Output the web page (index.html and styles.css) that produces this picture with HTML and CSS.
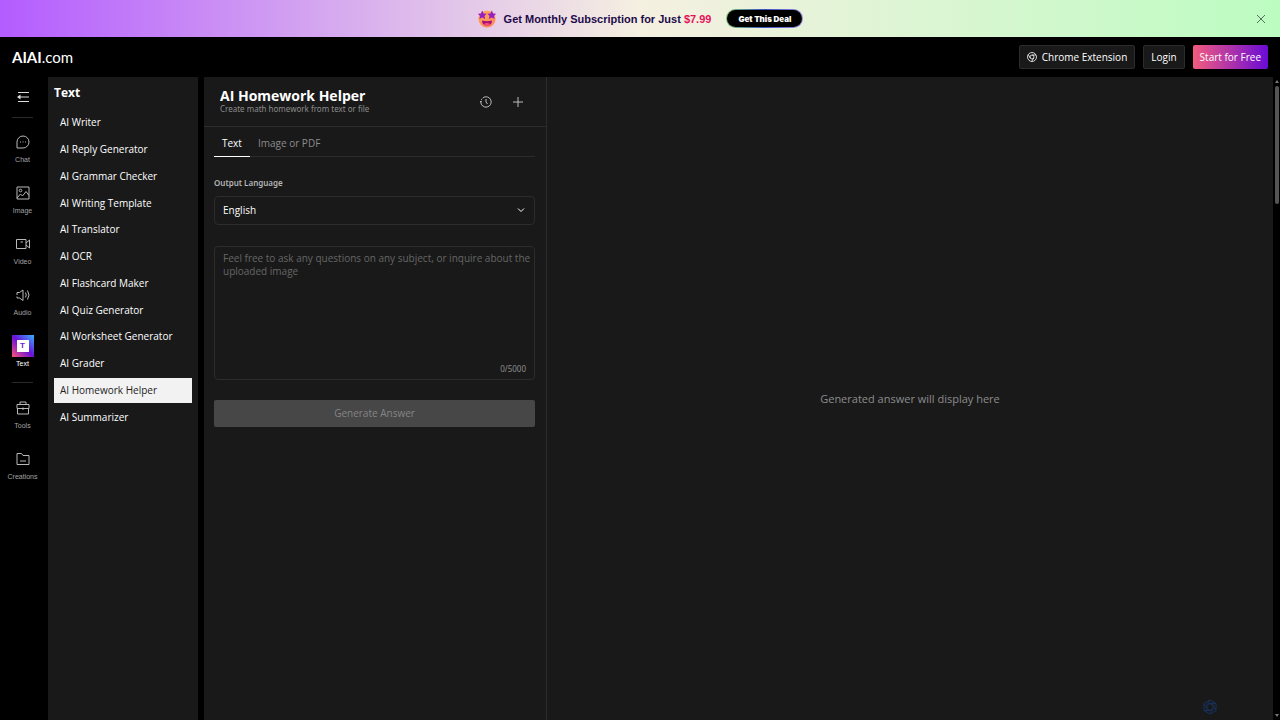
FILE: index.html
```html
<!DOCTYPE html>
<html lang="en">
<head>
<meta charset="utf-8">
<meta name="viewport" content="width=device-width, initial-scale=1">
<title>AI Homework Helper</title>
<link rel="stylesheet" href="styles.css">
</head>
<body>
<aside class="promo">
  <div class="promo-content">
    <svg class="promo-emoji" viewBox="0 0 20 20">
      <defs><linearGradient id="face" x1="0" y1="0" x2="0.4" y2="1"><stop offset="0" stop-color="#ffad55"/><stop offset="1" stop-color="#ff8a5c"/></linearGradient></defs>
      <circle cx="10" cy="10" r="8.6" fill="url(#face)"/>
      <path d="M5.2 1.6l1.5 2.8 3 .4-2.2 2.2.6 3.1-2.9-1.5-2.8 1.5.6-3.1L.8 4.8l3-.4z" fill="#9a1fc0"/>
      <path d="M14.8 1.6l1.4 2.8 3 .4-2.2 2.2.6 3.1-2.8-1.5-2.9 1.5.6-3.1-2.2-2.2 3-.4z" fill="#9a1fc0"/>
      <path d="M5 11.5c3 1 7 1 10 0 0 3.3-2 5-5 5s-5-1.7-5-5z" fill="#a30f7c"/>
      <path d="M7 15c1.5-1.2 4.5-1.2 6 0-1.5 1.7-4.5 1.7-6 0z" fill="#ff4f7a"/>
    </svg>
    <p class="promo-text">Get Monthly Subscription for Just <strong class="promo-price">$7.99</strong></p>
    <button class="promo-button" type="button">Get This Deal</button>
  </div>
  <button class="promo-close" type="button" aria-label="Close">
    <svg viewBox="0 0 10 10" width="10" height="10"><path d="M1 1l8 8M9 1L1 9"/></svg>
  </button>
</aside>

<header class="topbar">
  <a class="logo" href="#"><b class="logo-strong">AIAI</b>.com</a>
  <nav class="actions">
    <button class="button" type="button">
      <svg class="chrome" viewBox="0 0 10 10"><circle cx="5" cy="5" r="4.5"/><circle cx="5" cy="5" r="2"/><path d="M5 3h4M3.3 6L1.2 2.6M6.7 6L4.7 9.4"/></svg>
      Chrome Extension
    </button>
    <button class="button" type="button">Login</button>
    <button class="button button-primary" type="button">Start for Free</button>
  </nav>
</header>

<div class="shell">
  <nav class="rail">
    <button class="rail-toggle" type="button" aria-label="Collapse menu">
      <svg viewBox="0 0 12 12" width="12" height="12"><path d="M1 1.5h11M3 6h9M1 10.5h11"/><path class="solid" d="M0 6l3.5-2.5v5z"/></svg>
    </button>
    <hr class="rail-line">
    <div class="rail-group">
      <a class="rail-item" href="#"><span class="rail-icon"><svg viewBox="0 0 14 14"><path d="M1 13V7a6 6 0 1 1 6 6z"/><path d="M4 7h1M6.5 7h1M9 7h1"/></svg></span>Chat</a>
      <a class="rail-item" href="#"><span class="rail-icon"><svg viewBox="0 0 14 14"><path d="M1 1h12v12H1zM1 12l3.5-4 2 2L10 5.500l3 4"/><circle cx="4.5" cy="4.5" r="1.3"/></svg></span>Image</a>
      <a class="rail-item" href="#"><span class="rail-icon"><svg viewBox="0 0 14 14"><path d="M.5 2.5h9.5v9H.5zM10 6l3.500-3v8L10 8M4.500 5H7"/></svg></span>Video</a>
      <a class="rail-item" href="#"><span class="rail-icon"><svg viewBox="0 0 14 14"><path d="M1 4.500h2.500L7 2v10.500L3.500 10H1V8.500M1 4.500V7M9.500 4.500q1.500 2.500 0 5M11.500 2.500q3 4.500 0 9"/></svg></span>Audio</a>
      <a class="rail-item rail-current" href="#"><span class="rail-icon"><span class="text-tile">T</span></span>Text</a>
    </div>
    <hr class="rail-line">
    <div class="rail-group">
      <a class="rail-item" href="#"><span class="rail-icon"><svg viewBox="0 0 14 14"><path d="M4 3.500V1h6v2.500M1 3.500h12v4H1zM1.500 7.500v5.500h11V7.500M7 6.500v2.500"/></svg></span>Tools</a>
      <a class="rail-item" href="#"><span class="rail-icon"><svg viewBox="0 0 14 14"><path d="M1 1.500h4.500L7 3.500h6v9H1zM4 9h6"/></svg></span>Creations</a>
    </div>
  </nav>

  <nav class="sidebar">
    <h2 class="sidebar-title">Text</h2>
    <ul class="tools">
      <li><a class="tool" href="#">AI Writer</a></li>
      <li><a class="tool" href="#">AI Reply Generator</a></li>
      <li><a class="tool" href="#">AI Grammar Checker</a></li>
      <li><a class="tool" href="#">AI Writing Template</a></li>
      <li><a class="tool" href="#">AI Translator</a></li>
      <li><a class="tool" href="#">AI OCR</a></li>
      <li><a class="tool" href="#">AI Flashcard Maker</a></li>
      <li><a class="tool" href="#">AI Quiz Generator</a></li>
      <li><a class="tool" href="#">AI Worksheet Generator</a></li>
      <li><a class="tool" href="#">AI Grader</a></li>
      <li><a class="tool tool-current" href="#">AI Homework Helper</a></li>
      <li><a class="tool" href="#">AI Summarizer</a></li>
    </ul>
  </nav>

  <main class="workspace">
    <section class="panel">
      <header class="panel-header">
        <div class="panel-heading">
          <h1 class="panel-title">AI Homework Helper</h1>
          <p class="panel-subtitle">Create math homework from text or file</p>
        </div>
        <div class="panel-tools">
          <button class="icon-button" type="button" aria-label="History"><svg viewBox="0 0 12 12"><path d="M3 1.7A5.2 5.2 0 1 1 .8 6M.8 6l-.6-1M.8 6l1-.8M1.3 3.900l.9-1.300M6 3v3l1.500 2"/></svg></button>
          <button class="icon-button" type="button" aria-label="New"><svg viewBox="0 0 12 12"><path d="M6 1v10M1 6h10"/></svg></button>
        </div>
      </header>
      <form class="form">
        <div class="tabs" role="tablist">
          <button class="tab tab-current" type="button" role="tab" aria-selected="true">Text</button>
          <button class="tab" type="button" role="tab" aria-selected="false">Image or PDF</button>
        </div>
        <label class="label" for="language">Output Language</label>
        <div class="select-wrap">
          <select class="select" id="language"><option>English</option></select>
          <svg class="chevron" viewBox="0 0 8 8"><path d="M1 2.500l3 3 3-3"/></svg>
        </div>
        <div class="question">
          <textarea class="textarea" aria-label="Question" placeholder="Feel free to ask any questions on any subject, or inquire about the uploaded image"></textarea>
          <span class="counter">0/5000</span>
        </div>
        <button class="submit" type="button" disabled>Generate Answer</button>
      </form>
    </section>
    <section class="result">
      <p class="result-text">Generated answer will display here</p>
      <div class="mark">
        <svg class="mark-icon" viewBox="0 0 16 16"><path d="M8 1l6 3.500v7L8 15l-6-3.500v-7zM8 1L5 6.200v5.300M14 4.500H8L4.500 6.500M14 11.500L11 6.300 6.500 3.800M8 15l3-5.200V4.500M2 11.500h6l3.500-2M2 4.500l3 5.200 4.500 2.500"/></svg>
      </div>
    </section>
  </main>
  <div class="scrollbar"><i class="scroll-up"></i><i class="scroll-thumb"></i><i class="scroll-down"></i></div>
</div>
</body>
</html>
```
FILE: styles.css
```css
* { box-sizing: border-box; }

body {
  margin: 0;
  height: 100vh;
  display: flex;
  flex-direction: column;
  background: #000;
  color: #fff;
  font: 500 10px/13px "Open Sans", "Noto Sans", sans-serif;
  overflow: hidden;
}

h1, h2, p, ul, hr { margin: 0; padding: 0; }
ul { list-style: none; }
a { color: inherit; text-decoration: none; }
button, select, textarea { font: inherit; color: inherit; margin: 0; }
button { border: 0; padding: 0; background: none; cursor: pointer; }
svg { display: block; fill: none; stroke: currentColor; }

.promo {
  flex: none;
  height: 37px;
  position: relative;
  display: flex;
  align-items: center;
  justify-content: center;
  background: linear-gradient(90deg, #b45cff 0%, #f5f0e1 50%, #bcfcc1 100%);
}
.promo-content { display: flex; align-items: center; }
.promo-emoji { width: 20px; height: 20px; stroke: none; }
.promo-text {
  margin: 0 15px 0 7px;
  color: #1d0b4a;
  font: 600 11px/16px "Liberation Sans", sans-serif;
}
.promo-price { color: #e8105c; font-weight: 700; }
.promo-button {
  width: 77px;
  height: 19px;
  border: 1px solid transparent;
  border-radius: 10px;
  background: linear-gradient(#000, #000) padding-box, linear-gradient(90deg, #7fc26a, #3b4fc4, #9a8fe0) border-box;
  font: 900 8px/16px Inter, sans-serif;
}
.promo-close { position: absolute; right: 14px; top: 14px; color: #52705a; }

.topbar {
  flex: none;
  height: 40px;
  padding: 0 12px;
  display: flex;
  align-items: center;
  justify-content: space-between;
}
.logo { font: 15px/20px Lato, sans-serif; }
.logo-strong { font-weight: 700; }
.actions { display: flex; gap: 8px; }
.button {
  height: 24px;
  padding: 0 7px;
  display: flex;
  align-items: center;
  gap: 5px;
  border: 1px solid #2c2c2c;
  border-radius: 2px;
  background: #191919;
}
.button-primary {
  border: 0;
  background: linear-gradient(90deg, #f35c7e, #6a0bd6);
}
.chrome { width: 10px; height: 10px; stroke-width: 0.8; }

.shell { flex: 1; min-height: 0; display: flex; }

.rail {
  flex: none;
  width: 48px;
  display: flex;
  flex-direction: column;
  align-items: center;
  padding: 14px 3px 0 0;
}
.rail-toggle { color: #ddd; }
.rail-toggle .solid { fill: currentColor; stroke: none; }
.rail-line { width: 21px; border: 0; border-top: 1px solid #2a2a2a; margin: 14px 0 13px; }
.rail-group + .rail-line { margin: 11px 0 14px; }
.rail-group { display: grid; gap: 15px; }
.rail-item {
  display: flex;
  flex-direction: column;
  align-items: center;
  color: #a3a3a3;
  font: 7px/14px "Liberation Sans", sans-serif;
}
.rail-icon { width: 22px; height: 22px; display: grid; place-items: center; color: #b8b8b8; }
.rail-icon svg { width: 14px; height: 14px; }
.rail-current { color: #fff; }
.rail-current .rail-icon { background: linear-gradient(45deg, #ff5577, #6a10d8 50%, #35b4ff); }
.text-tile {
  width: 12px;
  height: 12px;
  background: #fff;
  color: #6a20d0;
  font: 700 8px/12px "Liberation Sans", sans-serif;
  text-align: center;
}

.sidebar { flex: none; width: 150px; padding: 6px 6px 0; background: #191919; }
.sidebar-title { font-size: 12px; font-weight: 700; line-height: 20px; }
.tools { height: 320px; margin-top: 7px; display: grid; grid-auto-rows: 1fr; gap: 1px; }
.tools li { display: grid; }
.tool { padding: 0 6px; display: flex; align-items: center; }
.tool-current { background: #f2f2f2; color: #222; }

.workspace { flex: 1; min-width: 0; margin-left: 6px; display: flex; background: #191919; }
.panel { flex: none; width: 343px; border-right: 1px solid #2c2c2c; }
.panel-header {
  height: 50px;
  padding: 0 22px 0 16px;
  display: flex;
  align-items: center;
  justify-content: space-between;
  border-bottom: 1px solid #2c2c2c;
}
.panel-title { font-size: 14px; font-weight: 700; line-height: 14px; }
.panel-subtitle { color: #8c8c8c; font: 8px/12px "Noto Sans", sans-serif; }
.panel-tools { display: flex; gap: 20px; color: #bbb; }
.icon-button svg { width: 12px; height: 12px; }

.form { padding: 4px 11px 0 10px; display: flex; flex-direction: column; }
.tabs { height: 26px; display: flex; border-bottom: 1px solid #2c2c2c; }
.tab { height: 26px; padding: 0 8px; border-bottom: 1px solid transparent; color: #8c8c8c; }
.tab-current { border-color: #fff; color: #fff; }
.label { margin-top: 19px; color: #b5b5b5; font: 600 8px/14px "Noto Sans", sans-serif; }
.select-wrap { margin-top: 6px; position: relative; }
.select {
  width: 100%;
  height: 29px;
  padding: 0 8px;
  border: 1px solid #2c2c2c;
  border-radius: 4px;
  background: #191919;
  appearance: none;
}
.chevron { position: absolute; right: 10px; top: 10px; width: 8px; height: 8px; pointer-events: none; }
.question { margin-top: 21px; position: relative; }
.textarea {
  display: block;
  width: 100%;
  height: 134px;
  padding: 5px 2px 5px 8px;
  border: 1px solid #2c2c2c;
  border-radius: 4px;
  background: #191919;
  resize: none;
}
.textarea::placeholder { color: #666; opacity: 1; }
.counter { position: absolute; right: 9px; bottom: 4px; color: #8c8c8c; font: 8px/14px "Noto Sans", sans-serif; }
.submit { height: 27px; margin-top: 20px; border-radius: 2px; background: #474747; color: #858585; }

.result { flex: 1; position: relative; display: grid; place-items: center; }
.result-text { color: #8c8c8c; font-size: 11px; line-height: 16px; }
.mark { position: absolute; right: 55px; bottom: 5px; }
.mark-icon { width: 16px; height: 16px; color: #17305c; }

.scrollbar {
  flex: none;
  width: 7px;
  padding: 3px 1px;
  display: flex;
  flex-direction: column;
  align-items: center;
}
.scroll-up { border: 2px solid transparent; border-top: 0; border-bottom: 3px solid #777; }
.scroll-thumb { width: 4px; height: 118px; margin-top: 3px; border-radius: 2px; background: #555; }
.scroll-down { margin-top: auto; border: 2px solid transparent; border-bottom: 0; border-top: 3px solid #777; }
```
